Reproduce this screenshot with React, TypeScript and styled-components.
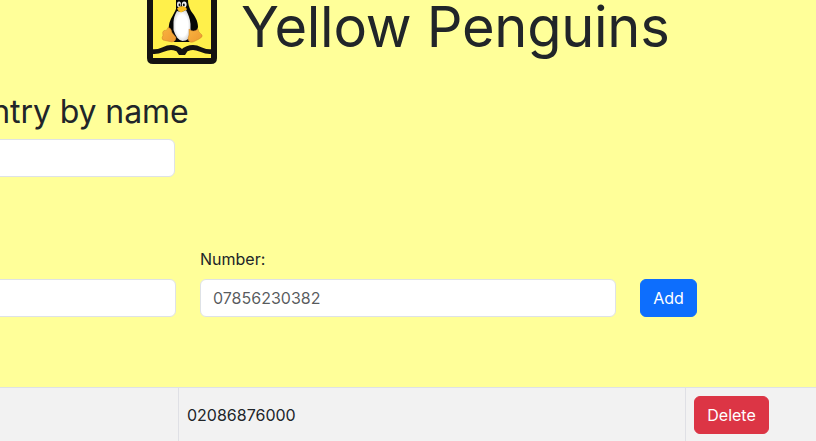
import React from "react";
import styled, { createGlobalStyle } from "styled-components";

const GlobalStyle = createGlobalStyle`
  *, *::before, *::after { box-sizing: border-box; }
  html, body { margin: 0; overflow: hidden; }
  body {
    background: #ffff99;
    color: #212529;
    font: 370 16px/24px Inter, sans-serif;
  }
`;

const Page = styled.main`
  width: 816px;
  height: 441px;
  display: flex;
  flex-direction: column;
  overflow: hidden;
`;

const Banner = styled.header`
  flex: none;
  height: 64px;
  display: flex;
  align-items: flex-end;
  gap: 24px;
  padding-left: 147px;
`;

const Logo = styled.svg`
  display: block;
  flex: none;
  width: 70px;
  height: 64px;
`;

const Title = styled.h1`
  margin: 0 0 3px;
  font-size: 56px;
  font-weight: 390;
  letter-spacing: -0.27px;
  line-height: 67px;
  white-space: nowrap;
`;

const SearchSection = styled.section`
  flex: none;
  padding-top: 28px;
`;

const SearchHeading = styled.h2`
  width: 188.5px;
  margin: 0 0 8px;
  display: flex;
  justify-content: flex-end;
  font-size: 32px;
  font-weight: 380;
  letter-spacing: -0.1px;
  line-height: 39px;
  white-space: nowrap;
`;

const Input = styled.input<{ $width: number; $bleed?: boolean }>`
  display: block;
  width: ${({ $width }) => $width}px;
  height: 38px;
  margin: 0 0 0 ${({ $bleed }) => ($bleed ? -12 : 0)}px;
  padding: 6px 12px;
  border: 1px solid #dee2e6;
  border-radius: 6px;
  background: #fff;
  color: #212529;
  font: inherit;
  outline: none;
  &::placeholder { color: rgba(33, 37, 41, 0.75); opacity: 1; }
`;

const EntryForm = styled.form`
  flex: none;
  display: flex;
  align-items: flex-end;
  gap: 24px;
  padding-top: 70px;
`;

const Field = styled.label`
  display: flex;
  flex-direction: column;
  gap: 8px;
`;

const Button = styled.button<{ $danger?: boolean }>`
  width: ${({ $danger }) => ($danger ? 75 : 57)}px;
  height: 38px;
  padding: 6px 0;
  border: 1px solid ${({ $danger }) => ($danger ? "#dc3545" : "#0d6efd")};
  border-radius: 6px;
  background: ${({ $danger }) => ($danger ? "#dc3545" : "#0d6efd")};
  color: #fff;
  font: inherit;
`;

const Row = styled.div`
  flex: none;
  display: grid;
  grid-template-columns: 178px 507px 1fr;
  height: 55px;
  margin-top: 70px;
  border-top: 1px solid #dee2e6;
  background: #f2f2f2;
`;

const Cell = styled.div<{ $ruled?: boolean }>`
  padding: ${({ $ruled }) => ($ruled ? "8px" : "8px 0")};
  border-left: ${({ $ruled }) => ($ruled ? "1px solid #dfe0e5" : "0")};
`;

const CellText = styled.span`
  display: block;
  padding-top: 7px;
`;

function PenguinLogo() {
  return (
    <Logo viewBox="0 0 70 64" role="img" aria-label="Penguin above an open book">
      <defs>
        <linearGradient id="foot" x1="0" y1="0" x2="1" y2="1">
          <stop stopColor="#f9b440" />
          <stop offset="1" stopColor="#ee982f" />
        </linearGradient>
        <radialGradient id="belly">
          <stop offset=".7" stopColor="#fff" />
          <stop offset="1" stopColor="#dedede" />
        </radialGradient>
      </defs>
      <path d="M0 0h70v58q0 6-6 6H6q-6 0-6-6Z" fill="#141311" />
      <path d="M6 0h58v58H6Z" fill="#fff04b" />
      <path d="M5 51.500C13 53 17 47.500 24 47.500C29 47.500 32 49.500 35 52C38 49.500 41 47.500 46 47.500C53 47.500 57 53 65 51.500" fill="none" stroke="#141311" strokeWidth="4.800" />
      <path d="M30 50h10v2l-2 3h-6l-2-3Z" fill="#141311" />
      <path d="M29 0h12c0 4 1 7 3 11 4 5 7 10 7 16l-2 7-6 8H27l-6-9 1-8c1-6 5-11 7-16Z" fill="#060606" />
      <path d="M30 11q5 2 9-1c2 4 4 8 4.500 14v9q-1 8-8 8-6-1-9-11v-8q0-5 3.500-11Z" fill="url(#belly)" />
      <ellipse cx="32" cy="4.400" rx="2" ry="2.800" fill="#e7e7e7" />
      <ellipse cx="37.200" cy="4.500" rx="2.400" ry="3" fill="#f2f2f2" />
      <ellipse cx="32.500" cy="5" rx=".9" ry="1.400" fill="#111" />
      <ellipse cx="36.800" cy="5" rx="1" ry="1.400" fill="#111" />
      <path d="M30 8.500q4-4 9-1l1 2-6 3q-3-1-4-4Z" fill="#fcbf20" />
      <path d="M21 27.500q3 0 4 5l4 5q0 4-4 4.500l-9-2q-2-2 0-4.500-1-4 1-5 3 1 4-3Z" fill="url(#foot)" stroke="#cb812b" strokeWidth=".5" />
      <path d="M42 29q4 4 9 0 0 3 4 6 1 2-3 4l-6 3q-5 1-5-4l1-3Z" fill="url(#foot)" stroke="#cb812b" strokeWidth=".5" />
    </Logo>
  );
}

export default function App() {
  return (
    <>
      <GlobalStyle />
      <Page>
        <Banner>
          <PenguinLogo />
          <Title>Yellow Penguins</Title>
        </Banner>
        <SearchSection>
          <SearchHeading>Find entry by name</SearchHeading>
          <Input aria-label="Find entry by name" $width={187} $bleed />
        </SearchSection>
        <EntryForm>
          <Input aria-label="Name" $width={188} $bleed />
          <Field>
            Number:
            <Input $width={416} placeholder="07856230382" />
          </Field>
          <Button type="button">Add</Button>
        </EntryForm>
        <Row>
          <Cell />
          <Cell $ruled><CellText>02086876000</CellText></Cell>
          <Cell $ruled><Button $danger type="button">Delete</Button></Cell>
        </Row>
      </Page>
    </>
  );
}
